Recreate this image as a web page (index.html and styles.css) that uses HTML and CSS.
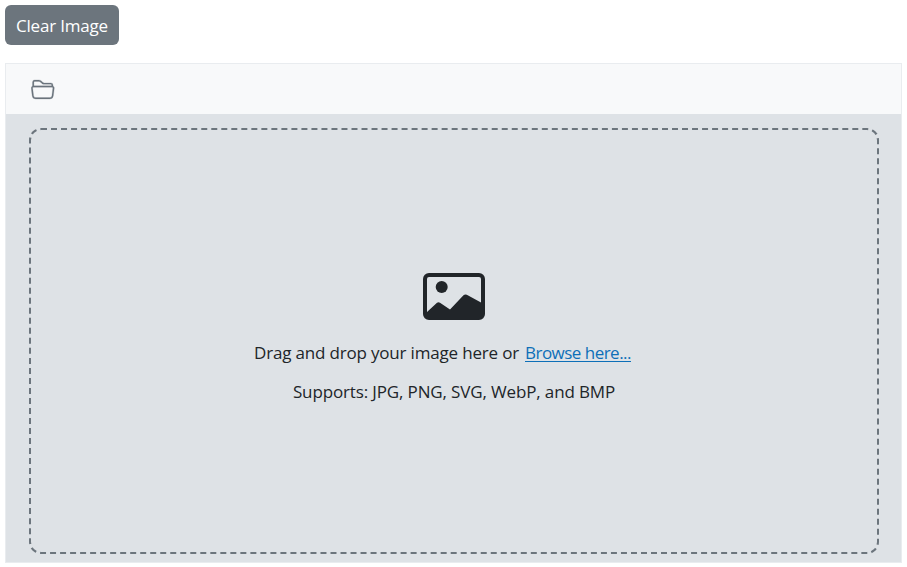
FILE: index.html
```html
<!DOCTYPE html>
<html lang="en">
<head>
<meta charset="utf-8">
<title>Image upload</title>
<link rel="stylesheet" href="styles.css">
</head>
<body>
<button class="clear" type="button"><span class="clear-label">Clear Image</span></button>
<section class="panel">
  <header class="toolbar">
    <svg class="folder" viewBox="0 0 16 16" fill="currentColor" aria-hidden="true"><path d="M1 3.5A1.5 1.5 0 0 1 2.5 2h2.764c.958 0 1.76.56 2.311 1.184C7.985 3.648 8.48 4 9 4h4.5A1.5 1.5 0 0 1 15 5.5v.64c.57.265.94.876.856 1.546l-.64 5.124A2.5 2.5 0 0 1 12.733 15H3.266a2.5 2.5 0 0 1-2.481-2.19l-.64-5.124A1.5 1.5 0 0 1 1 6.14zM2 6h12v-.5a.5.5 0 0 0-.5-.5H9c-.964 0-1.71-.629-2.174-1.154C6.374 3.334 5.82 3 5.264 3H2.5a.5.5 0 0 0-.5.5zm-.367 1a.5.5 0 0 0-.496.562l.64 5.124A1.5 1.5 0 0 0 3.266 14h9.468a1.5 1.5 0 0 0 1.489-1.314l.64-5.124A.5.5 0 0 0 14.367 7z"/></svg>
  </header>
  <div class="stage">
    <div class="dropzone">
      <svg class="picture" viewBox="0 0 62 47" fill="currentColor" aria-hidden="true"><path fill-rule="evenodd" d="M6 0h50a6 6 0 0 1 6 6v35a6 6 0 0 1-6 6H6a6 6 0 0 1-6-6V6a6 6 0 0 1 6-6zM4 39l10-9.2q1.5-1.2 3 0L27 36.500 40.500 22.300q1.500-1.500 3.300-.5L58 29.500V6a2 2 0 0 0-2-2H6a2 2 0 0 0-2 2z"/><circle cx="18.700" cy="14" r="6"/></svg>
      <p class="line prompt"><span class="drag">Drag and drop your image here or</span><a class="browse" href="#">Browse here...</a></p>
      <p class="line formats">Supports: JPG, PNG, SVG, WebP, and BMP</p>
    </div>
  </div>
</section>
</body>
</html>
```
FILE: styles.css
```css
* { box-sizing: border-box; }
body {
  margin: 0;
  padding: 5px 5px 0;
  height: 567px;
  overflow: hidden;
  background: #fff;
  color: #212529;
  font: 17px/24px "Segoe UI", "Open Sans", "Noto Sans", sans-serif;
}
.clear {
  display: block;
  width: 114px;
  height: 40px;
  padding: 2px 0 0 11px;
  border: 0;
  border-radius: 6px;
  background: #6c757d;
  color: #fff;
  font: inherit;
  text-align: left;
  white-space: nowrap;
}
.clear-label { letter-spacing: -0.19px; }
.panel {
  display: flex;
  flex-direction: column;
  width: 897px;
  height: 500px;
  margin-top: 18px;
  border: 1px solid #e9ecef;
}
.toolbar {
  height: 50px;
  padding: 13px 0 0 25px;
  background: #f8f9fa;
  color: #6c757d;
}
.folder {
  display: block;
  width: 23.500px;
  height: 23.500px;
  stroke: currentColor;
  stroke-width: 0.15px;
}
.stage {
  flex: 1;
  padding: 14px 22px 8px 23px;
  background: #dee2e6;
}
.dropzone {
  display: flex;
  flex-direction: column;
  align-items: center;
  height: 100%;
  padding-top: 143px;
  border: 2px dashed #6c757d;
  border-radius: 12px;
}
.picture { width: 62px; height: 47px; }
.line { margin: 0; white-space: nowrap; }
.prompt { display: flex; width: 400px; margin-top: 21px; }
.drag { width: 271px; letter-spacing: -0.18px; }
.browse { color: #0d6fb8; letter-spacing: -0.52px; text-underline-offset: 2px; text-decoration-thickness: 1px; }
.formats { margin-top: 15px; letter-spacing: -0.14px; }
```
